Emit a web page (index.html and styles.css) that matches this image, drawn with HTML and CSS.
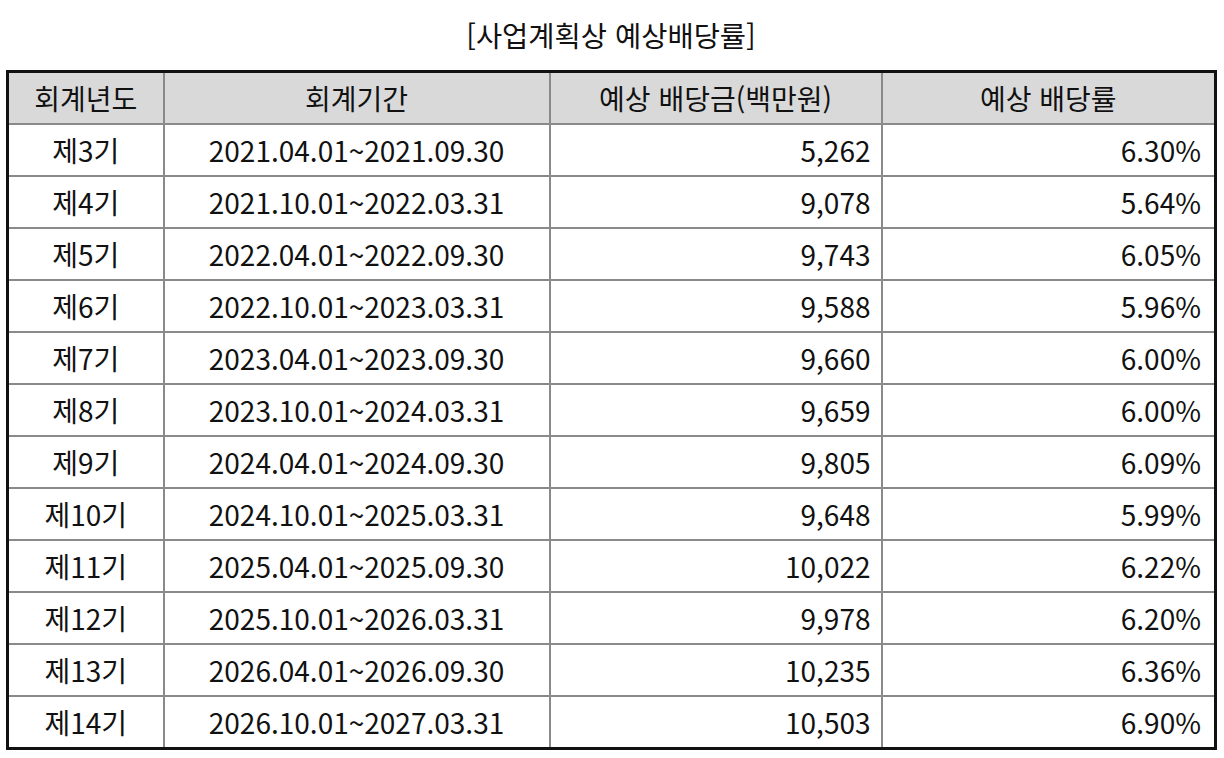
FILE: index.html
```html
<!DOCTYPE html>
<html lang="ko">
<head>
<meta charset="utf-8">
<link rel="stylesheet" href="styles.css">
</head>
<body>
<div class="wrap">
  <h1 class="title">[사업계획상 예상배당률]</h1>
  <table class="grid">
    <colgroup>
      <col class="c1"><col class="c2"><col class="c3"><col class="c4">
    </colgroup>
    <thead>
      <tr><th>회계년도</th><th>회계기간</th><th>예상 배당금(백만원)</th><th>예상 배당률</th></tr>
    </thead>
    <tbody>
      <tr><td class="ctr">제3기</td><td class="ctr">2021.04.01~2021.09.30</td><td class="num">5,262</td><td class="num pct">6.30%</td></tr>
      <tr><td class="ctr">제4기</td><td class="ctr">2021.10.01~2022.03.31</td><td class="num">9,078</td><td class="num pct">5.64%</td></tr>
      <tr><td class="ctr">제5기</td><td class="ctr">2022.04.01~2022.09.30</td><td class="num">9,743</td><td class="num pct">6.05%</td></tr>
      <tr><td class="ctr">제6기</td><td class="ctr">2022.10.01~2023.03.31</td><td class="num">9,588</td><td class="num pct">5.96%</td></tr>
      <tr><td class="ctr">제7기</td><td class="ctr">2023.04.01~2023.09.30</td><td class="num">9,660</td><td class="num pct">6.00%</td></tr>
      <tr><td class="ctr">제8기</td><td class="ctr">2023.10.01~2024.03.31</td><td class="num">9,659</td><td class="num pct">6.00%</td></tr>
      <tr><td class="ctr">제9기</td><td class="ctr">2024.04.01~2024.09.30</td><td class="num">9,805</td><td class="num pct">6.09%</td></tr>
      <tr><td class="ctr">제10기</td><td class="ctr">2024.10.01~2025.03.31</td><td class="num">9,648</td><td class="num pct">5.99%</td></tr>
      <tr><td class="ctr">제11기</td><td class="ctr">2025.04.01~2025.09.30</td><td class="num">10,022</td><td class="num pct">6.22%</td></tr>
      <tr><td class="ctr">제12기</td><td class="ctr">2025.10.01~2026.03.31</td><td class="num">9,978</td><td class="num pct">6.20%</td></tr>
      <tr><td class="ctr">제13기</td><td class="ctr">2026.04.01~2026.09.30</td><td class="num">10,235</td><td class="num pct">6.36%</td></tr>
      <tr><td class="ctr">제14기</td><td class="ctr">2026.10.01~2027.03.31</td><td class="num">10,503</td><td class="num pct">6.90%</td></tr>
    </tbody>
  </table>
</div>
</body>
</html>
```

FILE: styles.css
```css
html, body {
  margin: 0;
  padding: 0;
  background: #ffffff;
}
body {
  font-family: "Noto Sans CJK KR", "Noto Sans", sans-serif;
  color: #111111;
}
.wrap {
  padding: 0 10px 0 6px;
  display: flex;
  flex-direction: column;
  align-items: stretch;
}
.title {
  margin: 0;
  height: 70px;
  display: flex;
  align-items: center;
  justify-content: center;
  font-size: 28.5px;
  font-weight: 400;
  padding-left: 2px;
  padding-bottom: 2px;
  box-sizing: border-box;
}
.grid {
  width: 1208px;
  border-collapse: collapse;
  table-layout: fixed;
  border: 2px solid #111111;
  font-size: 28px;
}
.c1 { width: 156px; }
.c2 { width: 386px; }
.c3 { width: 332px; }
.c4 { width: 334px; }
.grid th, .grid td {
  border: 2px solid #8a8a8a;
  height: 50px;
  padding: 0 11px 0 11px;
  font-weight: 400;
  line-height: 1;
  white-space: nowrap;
}
.grid td.num { padding-right: 10px; }
.grid td.pct { padding-right: 13px; }
.grid th {
  background: #d9d9d9;
  text-align: center;
  height: 50px;
}
.grid tr:first-child th { border-top: 3px solid #111111; }
.grid th:first-child, .grid td:first-child { border-left: 3px solid #111111; }
.grid th:last-child, .grid td:last-child { border-right: 3px solid #111111; }
.grid tbody tr:last-child td { border-bottom: 3px solid #111111; }
.ctr { text-align: center; }
.num { text-align: right; }
```
